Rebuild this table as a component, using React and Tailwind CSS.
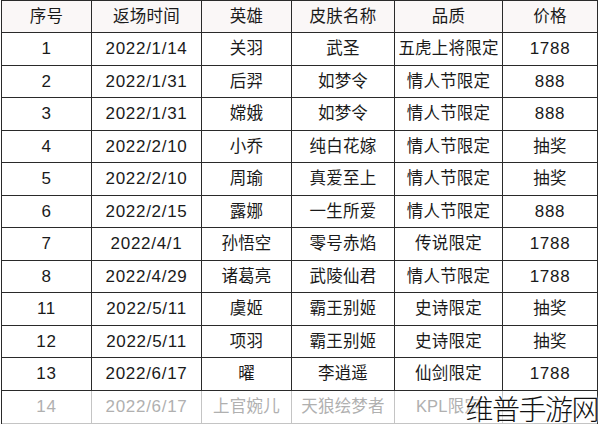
import React from 'react';

const cols = ['序号', '返场时间', '英雄', '皮肤名称', '品质', '价格'];

const rows = [
  ['1', '2022/1/14', '关羽', '武圣', '五虎上将限定', '1788'],
  ['2', '2022/1/31', '后羿', '如梦令', '情人节限定', '888'],
  ['3', '2022/1/31', '嫦娥', '如梦令', '情人节限定', '888'],
  ['4', '2022/2/10', '小乔', '纯白花嫁', '情人节限定', '抽奖'],
  ['5', '2022/2/10', '周瑜', '真爱至上', '情人节限定', '抽奖'],
  ['6', '2022/2/15', '露娜', '一生所爱', '情人节限定', '888'],
  ['7', '2022/4/1', '孙悟空', '零号赤焰', '传说限定', '1788'],
  ['8', '2022/4/29', '诸葛亮', '武陵仙君', '情人节限定', '1788'],
  ['11', '2022/5/11', '虞姬', '霸王别姬', '史诗限定', '抽奖'],
  ['12', '2022/5/11', '项羽', '霸王别姬', '史诗限定', '抽奖'],
  ['13', '2022/6/17', '曜', '李逍遥', '仙剑限定', '1788'],
];

// last row is washed out and half hidden by the watermark
const fadedRow = ['14', '2022/6/17', '上官婉儿', '天狼绘梦者', 'KPL限定', ''];

const gridCols = 'grid grid-cols-[90px_110px_90px_103px_108px_94px]';

const isNum = (v) => /^[0-9/]+$/.test(v);

const Cell = ({ children, last, faded }) => (
  <div
    className={
      'flex items-center justify-center h-full border-b-[1.5px] ' +
      (last ? '' : 'border-r-[1.5px] ') +
      (faded ? 'border-[#c4c4c4] text-[#b0b0b0] ' : 'border-[#2a2a2a] text-[#1a1a1a] ') +
      (isNum(children) ? 'text-[17px] tracking-[0.7px]' : 'text-[16.5px] tracking-[0.2px]')
    }
  >
    {children}
  </div>
);

export default function App() {
  return (
    <div className="relative w-[600px] h-[425px] bg-white overflow-hidden font-['Liberation_Sans','Noto_Sans_CJK_SC',sans-serif]">
      <div className="ml-[1px] w-[597px] border-l-[1.5px] border-r-[1.5px] border-t border-[#2a2a2a]">
        <div className={gridCols + ' h-[32px] bg-[#faf7f7]'}>
          {cols.map((c, i) => (
            <Cell key={c} last={i === cols.length - 1}>{c}</Cell>
          ))}
        </div>
        {rows.map((r) => (
          <div key={r[0]} className={gridCols + ' h-[32.5px]'}>
            {r.map((v, i) => (
              <Cell key={i} last={i === r.length - 1}>{v}</Cell>
            ))}
          </div>
        ))}
        <div className={gridCols + ' h-[33px]'}>
          {fadedRow.map((v, i) => (
            <Cell key={i} last={i === fadedRow.length - 1} faded>{v}</Cell>
          ))}
        </div>
      </div>
      <div className="absolute right-[2px] bottom-[3px] text-[28px] leading-none tracking-[-1.5px] text-[#111] font-['Noto_Sans_CJK_SC',sans-serif] font-light [text-shadow:0_0_3px_#fff,0_0_3px_#fff]">
        维普手游网
      </div>
    </div>
  );
}
